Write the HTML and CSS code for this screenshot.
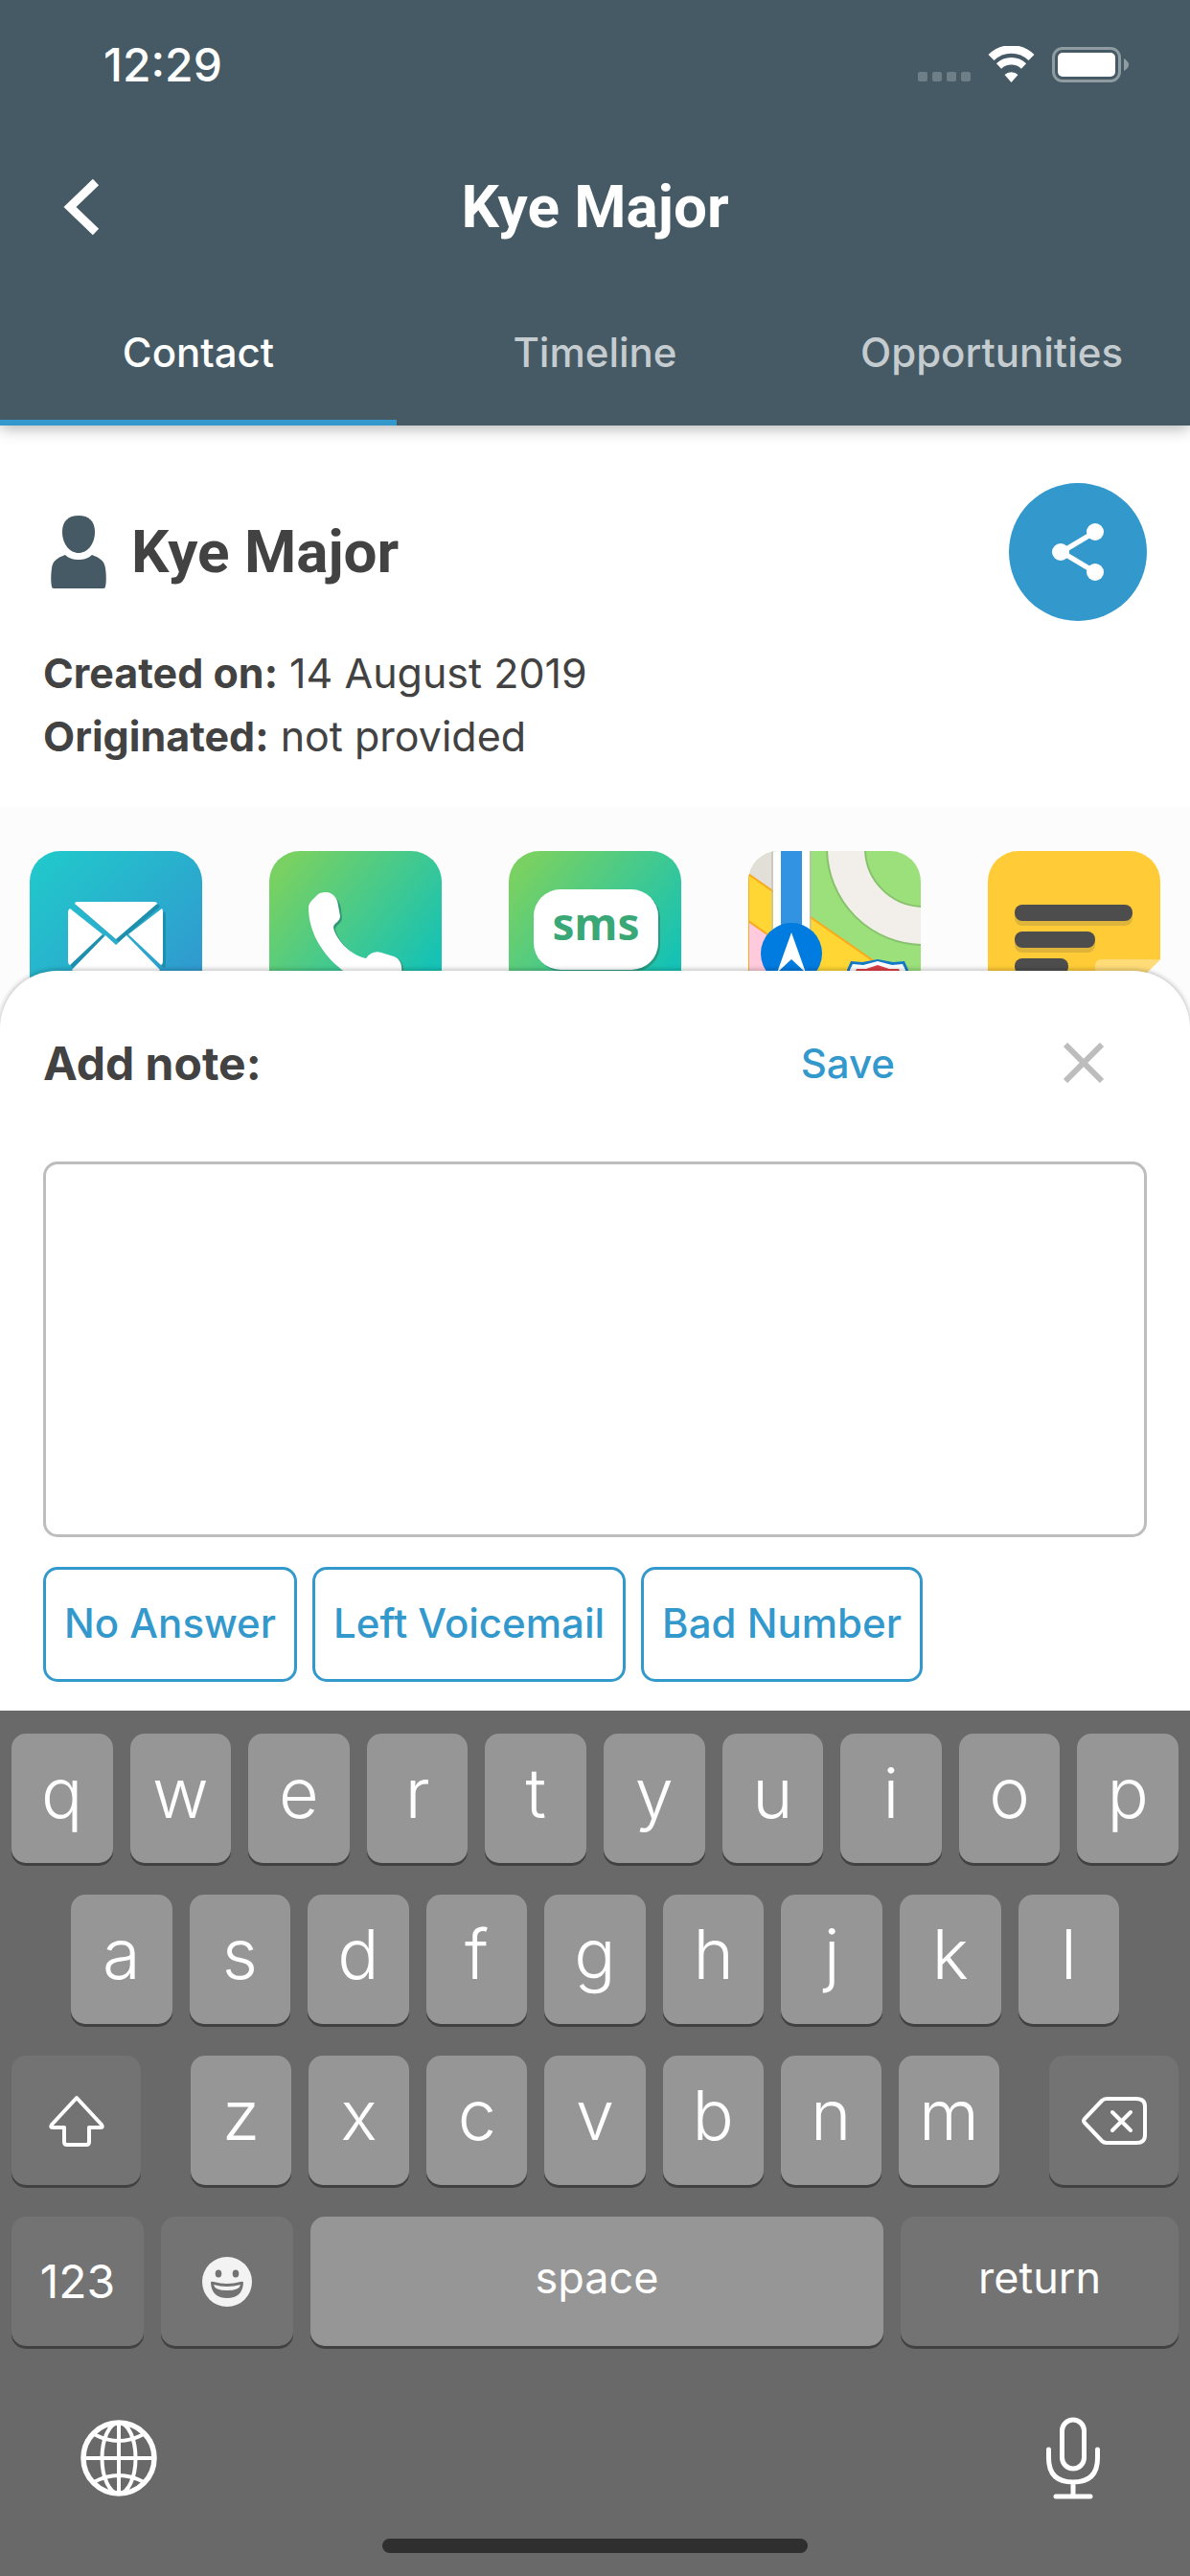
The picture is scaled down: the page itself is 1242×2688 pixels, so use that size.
FILE: index.html
```html
<!DOCTYPE html>
<html lang="en">
<head>
<meta charset="utf-8">
<meta name="viewport" content="width=device-width, initial-scale=1">
<title>Kye Major</title>
<link rel="stylesheet" href="styles.css">
</head>
<body>
<div class="screen">
  <header class="header">
    <div class="status">
      <span class="clock">12:29</span>
      <svg class="indicators" width="222" height="40" viewBox="0 0 222 40" aria-hidden="true">
        <g fill="#6e7f87"><rect x="0" y="27" width="10" height="10" rx="2"/><rect x="15" y="27" width="10" height="10" rx="2"/><rect x="30" y="27" width="10" height="10" rx="2"/><rect x="45" y="27" width="10" height="10" rx="2"/></g>
        <g fill="none" stroke="#fff">
          <path d="M76.500 12a30 30 0 0 1 42 0" stroke-width="8.500"/>
          <path d="M84.500 21a19 19 0 0 1 26 0" stroke-width="7.500"/>
        </g>
        <path d="M90.500 30a10 10 0 0 1 14 0l-7 8z" fill="#fff"/>
        <rect x="141.500" y="2.500" width="69" height="34" rx="9.500" fill="none" stroke="#8f9ca2" stroke-width="3"/>
        <rect x="146" y="7" width="60" height="25" rx="5" fill="#fff"/>
        <path d="M215 13q5 3 5 6.500t-5 6.500z" fill="#8f9ca2"/>
      </svg>
    </div>
    <div class="navbar">
      <button class="back" type="button" aria-label="Back">
        <svg width="38" height="60" viewBox="0 0 38 60"><path d="M34 4 7 30l27 26" fill="none" stroke="#fff" stroke-width="9"/></svg>
      </button>
      <h1 class="title">Kye Major</h1>
    </div>
    <nav class="tabs">
      <a class="tab tab-active" href="#contact" aria-current="page">Contact</a>
      <a class="tab" href="#timeline">Timeline</a>
      <a class="tab" href="#opportunities">Opportunities</a>
    </nav>
  </header>

  <main class="contact" id="contact">
    <div class="person">
      <svg class="avatar" width="58" height="76" viewBox="0 0 58 76" aria-hidden="true">
        <path d="M29 0c11 0 17 6 17 17 0 13-8 22-17 22S12 30 12 17C12 6 18 0 29 0z" fill="#455a64"/>
        <path d="M15 41c4 4 9 5 14 5s10-1 14-5c8 3 13 6 14 14 1 7 1 15 0 19q0 2-2 2H3q-2 0-2-2c-1-4-1-12 0-19 1-8 6-11 14-14z" fill="#455a64"/>
      </svg>
      <h2 class="title name">Kye Major</h2>
      <button class="share" type="button" aria-label="Share">
        <svg width="54" height="60" viewBox="0 0 54 60"><path d="M45 9 10 30l35 21" fill="none" stroke="#fff" stroke-width="5.500"/><g fill="#fff"><circle cx="45" cy="9" r="9"/><circle cx="9" cy="30" r="9"/><circle cx="45" cy="51" r="9"/></g></svg>
      </button>
    </div>
    <p class="detail"><strong>Created on:</strong> 14 August 2019</p>
    <p class="detail"><strong>Originated:</strong> not provided</p>
  </main>

  <nav class="apps" aria-label="Actions">
    <a class="app" href="#mail" aria-label="Email">
      <svg viewBox="0 0 180 180">
        <defs><linearGradient id="mail-fill" x1="0" y1="0" x2="1" y2="1"><stop offset="0" stop-color="#20cbcb"/><stop offset="1" stop-color="#3390d0"/></linearGradient></defs>
        <rect width="180" height="180" fill="url(#mail-fill)"/>
        <g fill="#1f8fae" transform="translate(3 3)"><path d="M47 55q0-2 3-2h80q3 0 3 2L90 92z"/><path d="M42 60 76 87 42 119q-2-1-2-4V64q0-3 2-4z"/><path d="m138 60-35 27 34 32q2-1 2-4V64q0-3-1-4z"/></g>
        <g fill="#fff"><path d="M47 55q0-2 3-2h80q3 0 3 2L90 92z"/><path d="M42 60 76 87 42 119q-2-1-2-4V64q0-3 2-4z"/><path d="m138 60-35 27 34 32q2-1 2-4V64q0-3-1-4z"/><path d="m79 88 11 10 11-10 35 36q-2 3-5 3H49q-3 0-5-3z"/></g>
      </svg>
    </a>
    <a class="app" href="#call" aria-label="Call">
      <svg viewBox="0 0 180 180">
        <defs><linearGradient id="call-fill" x1="0" y1="0" x2="1" y2=".8"><stop offset=".1" stop-color="#78d162"/><stop offset=".9" stop-color="#15c2b5"/></linearGradient></defs>
        <rect width="180" height="180" fill="url(#call-fill)"/>
        <path d="M43 62C43 54 52 46 60 46s14 5 15 15l1 9c0 6-7 7-7 12 3 12 18 29 34 32 4-6 11-9 17-7l12 4c8 4 9 12 8 20-2 12-10 16-18 14C77 136 43 101 43 62z" fill="#2f9a78"/>
        <path d="M41 59q0-4 4-8l5-5c3-3 7-3 10-3 7 1 11 6 12 14l2 11c0 6-7 7-7 12 3 13 18 29 34 32 4-6 10-8 16-6l13 4c8 3 9 11 8 19-2 12-10 17-18 15-45-9-79-46-79-85z" fill="#fff"/>
      </svg>
    </a>
    <a class="app" href="#sms" aria-label="SMS">
      <svg viewBox="0 0 180 180">
        <rect width="180" height="180" fill="url(#call-fill)"/>
        <rect x="28" y="42" width="130" height="84" rx="28" fill="#279b83"/>
        <rect x="26" y="40" width="130" height="84" rx="28" fill="#fff"/>
        <text class="sms" x="91" y="93" text-anchor="middle">sms</text>
      </svg>
    </a>
    <a class="app" href="#map" aria-label="Directions">
      <svg viewBox="0 0 180 180">
        <rect width="180" height="180" fill="#9be07a"/>
        <circle cx="183" cy="-3" r="81" fill="none" stroke="#89c26d" stroke-width="42"/>
        <circle cx="183" cy="-3" r="81" fill="none" stroke="#f2efea" stroke-width="38"/>
        <path d="M0 0h30v46L0 24z" fill="#e1dfd8"/>
        <path d="M0 24l180 125v31H0z" fill="#ffd633" stroke="#fca81b" stroke-width="2"/>
        <path d="M0 73l60 42v65H0z" fill="#ffcadb" stroke="#fca81b" stroke-width="2"/>
        <path d="M24 0h42v110H24z" fill="#bdbdaf" opacity=".6"/>
        <path d="M26 0h38v110H26z" fill="#fff"/>
        <path d="M34 0h22v110H34z" fill="#3393e3"/>
        <circle cx="45" cy="107" r="32" fill="#007be0"/>
        <path d="m45 85 15 42-15-14-15 14z" fill="#fff"/>
        <path d="m107 115 12 1 16-3 16 3 12-1 4 9-4 20-28 16-28-16-4-20z" fill="#1478c8"/>
        <path d="m109 118 11 1 15-4 15 4 11-1 3 6-4 18-25 14-25-14-4-18z" fill="#fff"/>
        <path d="m113 123 10 0 12-4 12 4h10l2 4-4 13-20 12-20-12-4-13z" fill="#dd4046"/>
      </svg>
    </a>
    <a class="app" href="#note" aria-label="Note">
      <svg viewBox="0 0 180 180">
        <rect width="180" height="180" fill="#ffcb36"/>
        <g fill="#deb53a"><rect x="28" y="61" width="123" height="17" rx="8"/><rect x="28" y="89" width="84" height="17" rx="8"/></g>
        <g fill="#4d4d4d"><rect x="28" y="56" width="123" height="17" rx="8"/><rect x="28" y="84" width="84" height="17" rx="8"/><rect x="28" y="112" width="56" height="17" rx="8"/></g>
        <path d="M180 113v67h-68z" fill="#fcfcfc"/>
        <path d="M112 180v-60q0-7 7-7h61z" fill="#ffdc78"/>
      </svg>
    </a>
  </nav>

  <section class="sheet">
    <div class="sheet-head">
      <label class="sheet-title" for="note-text">Add note:</label>
      <button class="save" type="button">Save</button>
      <button class="close" type="button" aria-label="Close">
        <svg width="42" height="42" viewBox="0 0 42 42"><path d="M2 2l38 38M40 2 2 40" stroke="#bdbdbd" stroke-width="6"/></svg>
      </button>
    </div>
    <textarea class="note" id="note-text"></textarea>
    <div class="presets">
      <button class="preset" type="button">No Answer</button>
      <button class="preset" type="button">Left Voicemail</button>
      <button class="preset" type="button">Bad Number</button>
    </div>
  </section>

  <section class="keyboard" aria-label="Keyboard">
    <div class="keys">
      <button class="key" type="button">q</button><button class="key" type="button">w</button><button class="key" type="button">e</button><button class="key" type="button">r</button><button class="key" type="button">t</button><button class="key" type="button">y</button><button class="key" type="button">u</button><button class="key" type="button">i</button><button class="key" type="button">o</button><button class="key" type="button">p</button>
    </div>
    <div class="keys keys-inset">
      <button class="key" type="button">a</button><button class="key" type="button">s</button><button class="key" type="button">d</button><button class="key" type="button">f</button><button class="key" type="button">g</button><button class="key" type="button">h</button><button class="key" type="button">j</button><button class="key" type="button">k</button><button class="key" type="button">l</button>
    </div>
    <div class="keys keys-wide-gap">
      <button class="key key-dark key-side" type="button" aria-label="Shift">
        <svg width="60" height="54" viewBox="0 0 60 54"><path d="M30 3 4 31q-2 3 1 3h12v15q0 3 3 3h20q3 0 3-3V34h12q3 0 1-3z" fill="none" stroke="#fff" stroke-width="4" stroke-linejoin="round"/></svg>
      </button>
      <div class="keys keys-inner">
        <button class="key" type="button">z</button><button class="key" type="button">x</button><button class="key" type="button">c</button><button class="key" type="button">v</button><button class="key" type="button">b</button><button class="key" type="button">n</button><button class="key" type="button">m</button>
      </div>
      <button class="key key-dark key-side" type="button" aria-label="Delete">
        <svg width="70" height="52" viewBox="0 0 70 52"><path d="M27 3h31q9 0 9 8v30q0 8-9 8H27q-3 0-5-2L4 28q-2-2 0-4L22 5q2-2 5-2z" fill="none" stroke="#fff" stroke-width="4"/><path d="m33 17 19 19M52 17 33 36" stroke="#fff" stroke-width="4" stroke-linecap="round"/></svg>
      </button>
    </div>
    <div class="keys">
      <button class="key key-dark key-mode" type="button">123</button>
      <button class="key key-dark key-mode" type="button" aria-label="Emoji">
        <svg width="52" height="52" viewBox="0 0 52 52"><circle cx="26" cy="26" r="26" fill="#f3f3f3"/><g fill="#737373"><ellipse cx="17" cy="17.500" rx="3.300" ry="4"/><ellipse cx="35" cy="17.500" rx="3.300" ry="4"/><path d="M9 27q0-2 3-1 14 4 28 0 3-1 3 1-1 16-17 16T9 27z"/></g><path d="M12 29q14 4 28 0-1 6-14 6t-14-6z" fill="#f3f3f3"/></svg>
      </button>
      <button class="key key-word" type="button">space</button>
      <button class="key key-dark key-word key-return" type="button">return</button>
    </div>
    <div class="tools">
      <button class="tool" type="button" aria-label="Next keyboard">
        <svg width="80" height="80" viewBox="0 0 80 80" fill="none" stroke="#fff" stroke-width="4"><circle cx="40" cy="40" r="37" stroke-width="5.500"/><ellipse cx="40" cy="40" rx="17.500" ry="37"/><path d="M40 3v74M3 40h74M14 15q26 14 52 0M14 65q26-14 52 0"/></svg>
      </button>
      <button class="tool" type="button" aria-label="Dictate">
        <svg width="58" height="86" viewBox="0 0 58 86" fill="none" stroke="#fff" stroke-width="5" stroke-linecap="round"><rect x="17.500" y="3" width="23" height="51" rx="11.500"/><path d="M3.500 34v9q0 25 25.500 25t25.500-25v-9M29 68v14M11 83h36"/></svg>
      </button>
    </div>
    <div class="home"></div>
  </section>
</div>
</body>
</html>
```
FILE: styles.css
```css
* { box-sizing: border-box; }

body {
  margin: 0;
  background: #696969;
  color: #424242;
  font-family: Inter, "Liberation Sans", sans-serif;
  font-size: 42px;
}

button {
  margin: 0;
  padding: 0;
  border: 0;
  background: none;
  color: inherit;
  font: inherit;
}

a { color: inherit; text-decoration: none; }
svg { display: block; }

.screen {
  display: flex;
  flex-direction: column;
  min-height: 100vh;
  background: #fff;
}

/* Header */
.header {
  position: relative;
  z-index: 1;
  background: #455a64;
  color: #fff;
  box-shadow: 0 3px 15px rgba(0, 0, 0, .3);
}

.status {
  display: flex;
  align-items: center;
  justify-content: space-between;
  height: 135px;
  padding: 0 62px 0 108px;
}

.clock { font-size: 48px; font-weight: 500; }

.navbar {
  display: grid;
  grid-template-columns: 1fr auto 1fr;
  align-items: center;
  height: 162px;
  padding: 0 66px;
}

.title {
  margin: 0;
  padding-bottom: 2px;
  font-family: Roboto, sans-serif;
  font-size: 62px;
  font-weight: 700;
}

.tabs {
  display: grid;
  grid-template-columns: repeat(3, 1fr);
}

.tab {
  display: flex;
  align-items: center;
  justify-content: center;
  height: 147px;
  border-bottom: 6px solid transparent;
  color: #c5ccd0;
  font-weight: 500;
}

.tab-active { border-color: #3399cc; color: #fff; }

/* Contact summary */
.contact { padding: 60px 45px 41px; }

.person {
  display: flex;
  align-items: center;
  margin-bottom: 21px;
}

.avatar { margin: 0 26px 0 8px; }
.name { flex: 1; }

.share {
  display: grid;
  place-items: center;
  width: 144px;
  height: 144px;
  border-radius: 50%;
  background: #3399cc;
}

.detail { margin: 0; font-size: 43px; line-height: 66px; }
.detail strong { font-weight: 700; }

/* Action tiles */
.apps {
  display: flex;
  justify-content: space-between;
  padding: 46px 31px 0;
  background: #fcfcfc;
}

.app {
  width: 180px;
  height: 180px;
  border-radius: 32px;
  overflow: hidden;
}

.sms {
  fill: #3aa876;
  font-family: "Noto Sans", sans-serif;
  font-size: 46px;
  font-weight: 700;
}

/* Note sheet */
.sheet {
  position: relative;
  margin-top: -55px;
  padding: 60px 45px 30px;
  border-radius: 60px 60px 0 0;
  background: #fff;
  box-shadow: 0 -1px 4px 1px rgba(0, 0, 0, .2);
}

.sheet-head {
  display: flex;
  align-items: center;
  height: 72px;
  margin-bottom: 67px;
}

.sheet-title { flex: 1; font-size: 48px; font-weight: 700; }
.save { color: #3399cc; font-weight: 500; }
.close { margin: 0 45px 0 176px; }

.note {
  display: block;
  width: 100%;
  height: 392px;
  padding: 24px;
  border: 3px solid #bdbdbd;
  border-radius: 15px;
  outline: 0;
  background: #fff;
  font: inherit;
  resize: none;
}

.presets {
  display: flex;
  gap: 16px;
  margin-top: 31px;
}

.preset {
  height: 120px;
  padding: 0 19px 3px;
  border: 3px solid #3399cc;
  border-radius: 15px;
  color: #3399cc;
  font-weight: 500;
}

/* Keyboard */
.keyboard {
  position: relative;
  display: flex;
  flex: 1;
  flex-direction: column;
  gap: 33px;
  padding: 24px 12px;
  background: #696969;
  color: #fff;
}

.keys { display: flex; gap: 18px; }
.keys-inset { padding: 0 62px; }
.keys-wide-gap { gap: 52px; }
.keys-inner { flex: 1; }

.key {
  display: flex;
  flex: 1 1 0;
  align-items: center;
  justify-content: center;
  min-width: 0;
  height: 135px;
  padding-bottom: 12px;
  border-radius: 15px;
  background: #969696;
  box-shadow: 0 3px 0 #414141;
  font-size: 72px;
  font-weight: 350;
}

.key-dark { padding: 0; background: #737373; }
.key-side { flex: 0 0 135px; }
.key-mode { flex: 0 0 138px; font-size: 48px; font-weight: 400; }
.key-word { padding-bottom: 8px; font-size: 45px; font-weight: 400; }
.key-return { flex: 0 0 290px; }

.tools {
  display: flex;
  align-items: center;
  justify-content: space-between;
  padding: 41px 81px 0 72px;
}

.home {
  align-self: center;
  width: 444px;
  height: 15px;
  margin-top: auto;
  border-radius: 8px;
  background: #2f2f2f;
}
```
